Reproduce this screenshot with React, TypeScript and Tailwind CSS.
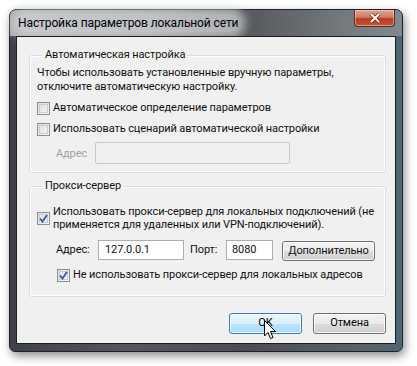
import React from 'react';

function CheckBox({ checked = false }: { checked?: boolean }) {
  return (
    <span className="relative flex h-[13px] w-[13px] shrink-0 items-center justify-center border border-[#8e8f8f] bg-[linear-gradient(135deg,#dcdcdc,#f8f8f8)]">
      <span className="absolute inset-[1px] border border-[#c9cdd2]" />
      {checked && (
        <svg viewBox="0 0 11 11" className="relative h-[11px] w-[11px]">
          <path d="M2 5.5 L4.5 8.5 L9 2" fill="none" stroke="#3b5b9c" strokeWidth="1.9" />
        </svg>
      )}
    </span>
  );
}

function Button({ children, active = false }: { children: React.ReactNode; active?: boolean }) {
  return (
    <button
      className={
        active
          ? 'flex h-[21px] w-[73px] items-center justify-center rounded-[3px] border border-[#3c7fb1] bg-[linear-gradient(#eaf6fd_0%,#d9f0fc_50%,#bee6fd_51%,#a7d9f5_100%)] text-black shadow-[inset_0_0_0_1px_rgba(255,255,255,0.7)]'
          : 'flex h-[21px] w-[73px] items-center justify-center rounded-[3px] border border-[#707070] bg-[linear-gradient(#f2f2f2_0%,#ebebeb_50%,#dddddd_51%,#cfcfcf_100%)] text-black shadow-[inset_0_0_0_1px_rgba(255,255,255,0.8)]'
      }
    >
      {children}
    </button>
  );
}

export default function App() {
  return (
    <div className="min-h-screen whitespace-nowrap bg-white p-[9px] font-['Roboto',sans-serif] text-[11px] tracking-[-0.1px] text-[#111]">
      {/* Window */}
      <div className="relative flex h-[343px] w-[394px] flex-col rounded-t-[7px] rounded-b-[6px] border border-[#1d2226] bg-[linear-gradient(90deg,#3e4246_0%,#54585c_30%,#4a4e52_60%,#5c6266_90%,#4b6774_100%)] px-[6px] pb-[7px] shadow-[2px_4px_10px_rgba(0,0,0,0.45)]">
        {/* Title bar */}
        <div className="-mx-[6px] flex h-[26px] items-start justify-between rounded-t-[6px] bg-[linear-gradient(90deg,#a7abae_0%,#8f9397_35%,#55595d_60%,#74797d_85%,#7f8a90_100%)] px-[6px]">
          <span className="ml-[1px] mt-[4px] rounded-[8px] bg-[#d4d6d8]/70 px-[1px] text-[12px] leading-[18px] text-black shadow-[0_0_10px_6px_rgba(214,216,218,0.7)]">
            Настройка параметров локальной сети
          </span>
          <div className="mr-[1px] flex h-[17px] w-[41px] items-center justify-center rounded-b-[4px] border border-t-0 border-[#5b2b22] bg-[linear-gradient(#e0a593_0%,#cf7b64_45%,#b8391f_55%,#c2553b_100%)] shadow-[inset_0_0_0_1px_rgba(255,220,200,0.5)]">
            <svg viewBox="0 0 12 10" className="h-[10px] w-[12px]">
              <path d="M2 1 L10 9 M10 1 L2 9" stroke="#5a2318" strokeWidth="3.4" />
              <path d="M2 1 L10 9 M10 1 L2 9" stroke="#ffffff" strokeWidth="2" />
            </svg>
          </div>
        </div>

        {/* Client area */}
        <div className="flex flex-1 flex-col border border-[#1b1f22] bg-[#f0f0f0] pl-[12px] pr-[9px] pt-[10px]">
          {/* Automatic configuration */}
          <fieldset className="rounded-[3px] border border-[#d5dfe5] px-[7px] pb-[8px] shadow-[inset_0_0_0_1px_#ffffff]">
            <legend className="ml-[6px] px-[2px] leading-[16px]">Автоматическая настройка</legend>
            <p className="pt-[3px] leading-[14px]">
              Чтобы использовать установленные вручную параметры,
              <br />
              отключите автоматическую настройку.
            </p>
            <label className="mt-[4px] flex h-[21px] items-center gap-[3px]">
              <CheckBox />
              <span>Автоматическое определение параметров</span>
            </label>
            <label className="flex h-[21px] items-center gap-[3px]">
              <CheckBox />
              <span>Использовать сценарий автоматической настройки</span>
            </label>
            <div className="mt-[2px] flex items-center">
              <span className="ml-[19px] w-[39px] pt-[2px] text-[#a2a2a2]">Адрес</span>
              <div className="h-[22px] w-[195px] rounded-[2px] border border-[#c9c9c9] bg-[#f0f0f0]" />
            </div>
          </fieldset>

          {/* Proxy server */}
          <fieldset className="mt-[5px] rounded-[3px] border border-[#d5dfe5] px-[7px] pb-[10px] shadow-[inset_0_0_0_1px_#ffffff]">
            <legend className="ml-[6px] px-[2px] leading-[16px]">Прокси-сервер</legend>
            <label className="mt-[11px] flex items-center gap-[3px]">
              <CheckBox checked />
              <span className="leading-[13px]">
                Использовать прокси-сервер для локальных подключений (не
                <br />
                применяется для удаленных или VPN-подключений).
              </span>
            </label>
            <div className="mt-[8px] flex items-center">
              <span className="ml-[19px] w-[42px]">Адрес:</span>
              <div className="flex h-[20px] w-[86px] items-center border border-[#abadb3] bg-white pl-[6px]">127.0.0.1</div>
              <span className="ml-[6px] w-[36px]">Порт:</span>
              <div className="flex h-[20px] w-[47px] items-center border border-[#abadb3] bg-white pl-[5px]">8080</div>
              <button className="ml-[9px] mt-[2px] flex h-[20px] w-[93px] items-center justify-center rounded-[3px] border border-[#707070] bg-[linear-gradient(#f2f2f2_0%,#ebebeb_50%,#dddddd_51%,#cfcfcf_100%)] shadow-[inset_0_0_0_1px_rgba(255,255,255,0.8)]">
                Дополнительно
              </button>
            </div>
            <label className="ml-[20px] mt-[4px] flex h-[21px] items-center gap-[3px]">
              <CheckBox checked />
              <span>Не использовать прокси-сервер для локальных адресов</span>
            </label>
          </fieldset>

          {/* Buttons */}
          <div className="mt-[16px] flex justify-end gap-[11px]">
            <div className="relative">
              <Button active>OK</Button>
              <svg viewBox="0 0 13 20" className="absolute left-[35px] top-[7px] h-[20px] w-[13px]">
                <path d="M0.5 0.5 L0.5 16 L4 12.5 L6.5 18.5 L9 17.5 L6.5 11.5 L11.5 11.5 Z" fill="#ffffff" stroke="#000000" strokeWidth="1" strokeLinejoin="round" />
              </svg>
            </div>
            <Button>Отмена</Button>
          </div>
        </div>
      </div>
    </div>
  );
}
